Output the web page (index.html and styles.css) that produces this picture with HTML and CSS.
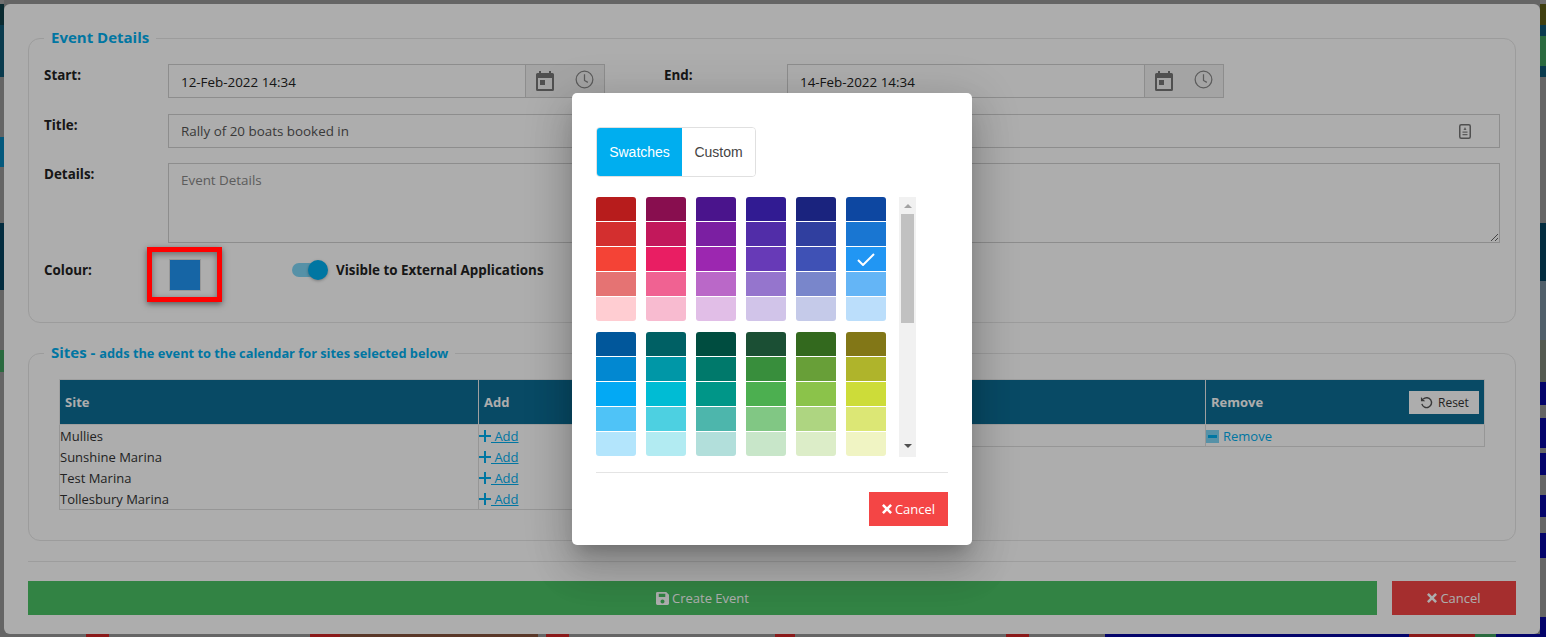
FILE: index.html
```html
<!DOCTYPE html>
<html lang="en">
<head>
    <meta charset="UTF-8">
    <meta name="viewport" content="width=device-width, initial-scale=1.0">
    <title>Create Event</title>
    <link rel="stylesheet" href="styles.css">
</head>
<body>
    <!-- page behind the dialog, only its edges show -->
    <div class="backdrop">
        <div class="strip-left">
            <div class="bg-top"></div><div class="bg-ink"></div><div class="bg-teal"></div><div></div><div class="bg-blue"></div><div></div><div class="bg-navy"></div><div></div><div class="bg-green"></div><div></div>
        </div>
        <div class="strip-right">
            <div class="bg-top"></div><div class="bg-olive"></div><div class="bg-teal"></div><div class="bg-green"></div><div class="bg-teal"></div><div></div><div class="bg-navy"></div><div class="bg-slate"></div><div class="bg-moss"></div><div class="bg-indigo"></div><div></div><div class="bg-indigo"></div><div></div><div class="bg-indigo"></div><div></div><div class="bg-indigo"></div><div></div><div class="bg-indigo"></div><div></div><div class="bg-indigo"></div>
        </div>
        <div class="strip-bottom">
            <div></div><div class="bg-red"></div><div></div><div class="bg-red"></div><div class="bg-brown"></div><div></div><div class="bg-red"></div><div></div><div class="bg-red"></div><div></div><div class="bg-red"></div><div></div><div class="bg-indigo"></div><div class="bg-red"></div><div class="bg-green"></div><div class="bg-indigo"></div>
        </div>
    </div>

    <div class="dialog">
        <fieldset class="box event-box">
            <legend>Event Details</legend>

            <div class="row">
                <label class="lbl">Start:</label>
                <div class="date-group">
                    <input class="txt date" type="text" value="12-Feb-2022 14:34">
                    <div class="addon">
                        <svg class="ico-cal" viewBox="0 0 18 20"><path d="M3 0h2v2h8V0h2v2h1.500A1.500 1.500 0 0 1 18 3.500v15a1.500 1.500 0 0 1-1.500 1.500h-15A1.500 1.500 0 0 1 0 18.500v-15A1.500 1.500 0 0 1 1.500 2H3zM2 7v11h14V7z"/><rect x="4" y="9" width="5" height="5"/></svg>
                        <svg class="ico-clock" viewBox="0 0 20 20"><circle cx="10" cy="10" r="8.800"/><path d="M10 4.500V11l3.500 2"/></svg>
                    </div>
                </div>
                <label class="lbl lbl-end">End:</label>
                <div class="date-group">
                    <input class="txt date" type="text" value="14-Feb-2022 14:34">
                    <div class="addon">
                        <svg class="ico-cal" viewBox="0 0 18 20"><path d="M3 0h2v2h8V0h2v2h1.500A1.500 1.500 0 0 1 18 3.500v15a1.500 1.500 0 0 1-1.500 1.500h-15A1.500 1.500 0 0 1 0 18.500v-15A1.500 1.500 0 0 1 1.500 2H3zM2 7v11h14V7z"/><rect x="4" y="9" width="5" height="5"/></svg>
                        <svg class="ico-clock" viewBox="0 0 20 20"><circle cx="10" cy="10" r="8.800"/><path d="M10 4.500V11l3.500 2"/></svg>
                    </div>
                </div>
            </div>

            <div class="row title-row">
                <label class="lbl">Title:</label>
                <div class="title-field">
                    <input class="txt muted" type="text" value="Rally of 20 boats booked in">
                    <svg class="ico-contact" viewBox="0 0 12 15"><rect x="0.750" y="0.750" width="10.500" height="13.500" rx="1.500"/><path class="fill" d="M6 3l1.500 3h-3zM3.500 7.500h5v1.200h-5zM3.500 10h5v1.200h-5z"/></svg>
                </div>
            </div>

            <div class="row details-row">
                <label class="lbl">Details:</label>
                <textarea class="txt details" placeholder="Event Details"></textarea>
            </div>

            <div class="row colour-row">
                <label class="lbl lbl-colour">Colour:</label>
                <div class="colour-swatch"><span class="callout"></span></div>
                <div class="toggle"><span class="knob"></span></div>
                <span class="toggle-text">Visible to External Applications</span>
            </div>
        </fieldset>

        <fieldset class="box sites-box">
            <legend>Sites - <small>adds the event to the calendar for sites selected below</small></legend>
            <div class="tables">
                <table class="sites">
                    <thead><tr><th class="col-site">Site</th><th>Add</th></tr></thead>
                    <tbody>
                        <tr><td>Mullies</td><td><a href="#" class="link"><svg class="ico-plus" viewBox="0 0 12 12"><path d="M5 0h2v5h5v2H7v5H5V7H0V5h5z"/></svg> Add</a></td></tr>
                        <tr><td>Sunshine Marina</td><td><a href="#" class="link"><svg class="ico-plus" viewBox="0 0 12 12"><path d="M5 0h2v5h5v2H7v5H5V7H0V5h5z"/></svg> Add</a></td></tr>
                        <tr><td>Test Marina</td><td><a href="#" class="link"><svg class="ico-plus" viewBox="0 0 12 12"><path d="M5 0h2v5h5v2H7v5H5V7H0V5h5z"/></svg> Add</a></td></tr>
                        <tr><td>Tollesbury Marina</td><td><a href="#" class="link"><svg class="ico-plus" viewBox="0 0 12 12"><path d="M5 0h2v5h5v2H7v5H5V7H0V5h5z"/></svg> Add</a></td></tr>
                    </tbody>
                </table>
                <table class="sites selected">
                    <thead><tr><th class="col-chosen">Site</th><th><div class="head-flex">Remove <button class="reset" type="button"><svg class="ico-undo" viewBox="0 0 14 14"><path d="M3.500 3.300A5.300 5.300 0 1 1 2 8.500"/><path class="fill" d="M1 1v4.600h4.600z"/></svg>Reset</button></div></th></tr></thead>
                    <tbody>
                        <tr><td>Mullies</td><td><a href="#" class="link plain"><span class="minus"><i></i></span>Remove</a></td></tr>
                    </tbody>
                </table>
            </div>
        </fieldset>

        <hr class="divider">

        <div class="actions">
            <button class="btn btn-save" type="button"><svg class="ico-save" viewBox="0 0 14 14"><path d="M1.500 0H11l3 3v9.500a1.500 1.500 0 0 1-1.500 1.500h-11A1.500 1.500 0 0 1 0 12.500v-11A1.500 1.500 0 0 1 1.500 0zM3 2v3.500h7V2zm4 6a2.200 2.200 0 1 0 0 4.400A2.200 2.200 0 0 0 7 8z" fill-rule="evenodd"/></svg>Create Event</button>
            <button class="btn btn-cancel" type="button"><svg class="ico-x" viewBox="0 0 10 10"><path d="M1.800 0L5 3.200 8.200 0 10 1.800 6.800 5 10 8.200 8.200 10 5 6.800 1.800 10 0 8.200 3.200 5 0 1.800z"/></svg>Cancel</button>
        </div>
    </div>

    <div class="scrim"></div>

    <div class="picker">
        <div class="tabs">
            <button class="tab tab-on" type="button">Swatches</button>
            <button class="tab" type="button">Custom</button>
        </div>

        <div class="palette-wrap">
            <div class="palette">
                <div class="group">
                    <div class="red-9"></div><div class="red-7"></div><div class="red-5"></div><div class="red-3"></div><div class="red-1"></div>
                    <div class="pink-9"></div><div class="pink-7"></div><div class="pink-5"></div><div class="pink-3"></div><div class="pink-1"></div>
                    <div class="purple-9"></div><div class="purple-7"></div><div class="purple-5"></div><div class="purple-3"></div><div class="purple-1"></div>
                    <div class="deep-9"></div><div class="deep-7"></div><div class="deep-5"></div><div class="deep-3"></div><div class="deep-1"></div>
                    <div class="indigo-9"></div><div class="indigo-7"></div><div class="indigo-5"></div><div class="indigo-3"></div><div class="indigo-1"></div>
                    <div class="blue-9"></div><div class="blue-7"></div><div class="blue-5 picked"><svg class="ico-check" viewBox="0 0 18 13"><path d="M1 7l5 5L17 1"/></svg></div><div class="blue-3"></div><div class="blue-1"></div>
                </div>
                <div class="group">
                    <div class="sky-9"></div><div class="sky-7"></div><div class="sky-5"></div><div class="sky-3"></div><div class="sky-1"></div>
                    <div class="cyan-9"></div><div class="cyan-7"></div><div class="cyan-5"></div><div class="cyan-3"></div><div class="cyan-1"></div>
                    <div class="teal-9"></div><div class="teal-7"></div><div class="teal-5"></div><div class="teal-3"></div><div class="teal-1"></div>
                    <div class="green-9"></div><div class="green-7"></div><div class="green-5"></div><div class="green-3"></div><div class="green-1"></div>
                    <div class="lime-9"></div><div class="lime-7"></div><div class="lime-5"></div><div class="lime-3"></div><div class="lime-1"></div>
                    <div class="olive-9"></div><div class="olive-7"></div><div class="olive-5"></div><div class="olive-3"></div><div class="olive-1"></div>
                </div>
            </div>
            <div class="scrollbar">
                <span class="arrow-up"></span>
                <span class="thumb"></span>
                <span class="arrow-down"></span>
            </div>
        </div>

        <hr class="picker-rule">

        <div class="picker-foot">
            <button class="btn btn-cancel picker-cancel" type="button"><svg class="ico-x" viewBox="0 0 10 10"><path d="M1.800 0L5 3.200 8.200 0 10 1.800 6.800 5 10 8.200 8.200 10 5 6.800 1.800 10 0 8.200 3.200 5 0 1.800z"/></svg>Cancel</button>
        </div>
    </div>
</body>
</html>
```

FILE: styles.css
```css
* {
    box-sizing: border-box;
}
html, body {
    height: 637px;
}
body {
    margin: 0;
    padding: 4px 6px 3px 4px;
    position: relative;
    overflow: hidden;
    font-family: "Open Sans", "Noto Sans", sans-serif;
    font-size: 13px;
    color: #333;
    background-color: #969696;
}

/* behind the dialog */
.backdrop {
    position: absolute;
    top: 0;
    left: 0;
    right: 0;
    bottom: 0;
}
.strip-left, .strip-right {
    position: absolute;
    top: 0;
    bottom: 0;
    display: grid;
}
.strip-left {
    left: 0;
    width: 4px;
    grid-template-rows: 4px 21px 52px 60px 30px 56px 67px 60px 22px 1fr;
}
.strip-right {
    right: 0;
    width: 6px;
    grid-template-rows: 4px 21px 11px 30px 11px 146px 58px 59px 42px 23px 13px 30px 5px 22px 20px 22px 16px 25px 59px 1fr;
}
.strip-bottom {
    position: absolute;
    left: 0;
    right: 0;
    bottom: 0;
    height: 3px;
    display: grid;
    grid-template-columns: 86px 23px 201px 30px 198px 8px 23px 206px 20px 211px 23px 76px 304px 66px 21px 1fr;
}
.bg-top { background-color: #a5a5a5; }
.bg-ink { background-color: #0f3e47; }
.bg-teal { background-color: #0f5873; }
.bg-blue { background-color: #0783b9; }
.bg-navy { background-color: #05415e; }
.bg-green { background-color: #3e9c5d; }
.bg-olive { background-color: #5d5e18; }
.bg-slate { background-color: #768d9c; }
.bg-moss { background-color: #7d8476; }
.bg-indigo { background-color: #07079d; }
.bg-red { background-color: #cc2626; }
.bg-brown { background-color: #84523b; }

/* dialog */
.dialog {
    position: relative;
    height: 630px;
    padding: 24px;
    background-color: #fff;
    border-radius: 6px;
}
.scrim {
    position: absolute;
    top: 0;
    left: 0;
    right: 0;
    bottom: 0;
    z-index: 2;
    background-color: rgba(0, 0, 0, 0.32);
}
.box {
    margin: 0;
    min-width: 0;
    border: 1px solid #e6e6e6;
    border-radius: 12px;
}
.box legend {
    height: 20px;
    margin: 0;
    padding: 0 7px 2px;
    font-size: 15px;
    line-height: 18px;
    font-weight: bold;
    color: #00aeef;
}
.box legend small {
    font-size: 12.800px;
}
.event-box {
    height: 295px;
    padding: 16px 15px 0;
}
.sites-box {
    height: 198px;
    margin-top: 20px;
    padding: 16px 30px 0;
}
.sites-box legend {
    margin-left: -15px;
}
.row {
    display: flex;
}
.title-row {
    margin-top: 16px;
}
.details-row {
    margin-top: 15px;
}
.colour-row {
    margin-top: 16px;
    align-items: flex-start;
}
.lbl {
    flex: none;
    width: 124px;
    font-size: 13.400px;
    font-weight: bold;
    line-height: 22px;
    color: #222;
}
.lbl-end {
    width: 123px;
    margin-left: 59px;
}
.lbl-colour {
    width: 125px;
}
.txt {
    width: 100%;
    height: 34px;
    padding: 0 12px;
    font-family: inherit;
    font-size: 13.400px;
    color: #222;
    background-color: #fff;
    border: 1px solid #d0d0d0;
    border-radius: 0;
    outline: none;
}
.date {
    padding-top: 2px;
}
.muted {
    color: #555;
}
.date-group {
    flex: none;
    width: 437px;
    display: flex;
}
.addon {
    flex: none;
    width: 79px;
    height: 34px;
    display: flex;
    align-items: center;
    padding-left: 10px;
    background-color: #f2f2f2;
    border: 1px solid #d0d0d0;
    border-left: none;
}
.ico-cal {
    width: 18px;
    height: 20px;
    fill: #777;
}
.ico-clock {
    width: 19px;
    height: 19px;
    margin-left: 21px;
    margin-top: -3px;
    fill: none;
    stroke: #888;
    stroke-width: 1.300;
}
.title-field {
    flex: 1;
    position: relative;
}
.ico-contact {
    position: absolute;
    top: 10px;
    right: 29px;
    width: 12px;
    height: 15px;
    fill: none;
    stroke: #777;
    stroke-width: 1.500;
}
.ico-contact .fill {
    fill: #888;
    stroke: none;
}
.details {
    display: block;
    flex: 1;
    height: 80px;
    padding-top: 7px;
    resize: both;
}
.details::placeholder {
    color: #888;
    opacity: 1;
}
.colour-swatch {
    position: relative;
    flex: none;
    width: 32px;
    height: 32px;
    background-color: #2196f3;
    border: 1px solid #e0e0e0;
}
.callout {
    position: absolute;
    top: -13px;
    left: -23px;
    width: 75px;
    height: 55px;
    z-index: 3;
    border: 5px solid #f00;
    box-shadow: 0 2px 6px rgba(0, 0, 0, 0.5), inset 0 2px 6px rgba(0, 0, 0, 0.4);
}
.toggle {
    position: relative;
    flex: none;
    width: 24px;
    height: 14px;
    margin: 4px 0 0 91px;
    background-color: rgba(0, 174, 239, 0.5);
    border-radius: 7px;
}
.knob {
    position: absolute;
    top: -3px;
    right: -12px;
    width: 20px;
    height: 20px;
    border-radius: 50%;
    background-color: #00aeef;
    box-shadow: 0 1px 3px rgba(0, 0, 0, 0.3);
}
.toggle-text {
    margin-left: 20px;
    font-size: 13.400px;
    font-weight: bold;
    line-height: 22px;
    color: #222;
}

/* site tables */
.tables {
    display: flex;
}
.sites {
    width: 713px;
    flex: none;
    align-self: flex-start;
    table-layout: fixed;
    border-collapse: collapse;
}
.sites th {
    height: 45px;
    padding: 0 5px;
    text-align: left;
    font-size: 13px;
    color: #fff;
    background-color: #0c6e96;
    border: 1px solid #ebebeb;
}
.sites td {
    height: 21px;
    padding: 1px 0 0;
    line-height: 20px;
    color: #333;
    border-left: 1px solid #dedede;
    border-right: 1px solid #dedede;
}
.sites tr:last-child td {
    border-bottom: 1px solid #dedede;
}
.col-site {
    width: 419px;
}
.col-chosen {
    width: 433px;
}
.link {
    color: #00aeef;
}
.plain {
    text-decoration: none;
}
.ico-plus {
    width: 12px;
    height: 12px;
    fill: #00aeef;
    vertical-align: -1px;
}
.minus {
    display: inline-block;
    width: 13px;
    height: 13px;
    margin-right: 4px;
    vertical-align: -2px;
    padding-top: 5px;
    background-color: rgba(0, 174, 239, 0.5);
}
.minus i {
    display: block;
    height: 3px;
    margin: 0 2px;
    background-color: #00aeef;
}
.head-flex {
    display: flex;
    align-items: center;
    justify-content: space-between;
}
.reset {
    display: flex;
    align-items: center;
    gap: 5px;
    width: 70px;
    height: 23px;
    padding: 0 0 0 11px;
    font-family: inherit;
    font-size: 12px;
    color: #333;
    background-color: #fff;
    border: none;
}
.ico-undo {
    width: 13px;
    height: 13px;
    fill: none;
    stroke: #555;
    stroke-width: 1.500;
}
.ico-undo .fill {
    fill: #555;
    stroke: none;
}

/* footer */
.divider {
    height: 1px;
    margin: 20px 0 19px;
    border: none;
    background-color: #e8e8e8;
}
.actions {
    display: flex;
    gap: 15px;
}
.btn {
    display: flex;
    align-items: center;
    justify-content: center;
    gap: 3px;
    height: 34px;
    padding: 0;
    font-family: inherit;
    font-size: 13px;
    color: #fff;
    border: none;
}
.btn-save {
    flex: 1;
    background-color: #4ac165;
}
.btn-cancel {
    flex: none;
    width: 124px;
    background-color: #f44545;
}
.ico-save {
    width: 13px;
    height: 13px;
    fill: #fff;
}
.ico-x {
    width: 10px;
    height: 10px;
    fill: #fff;
}

/* colour picker */
.picker {
    position: absolute;
    top: 93px;
    left: 572px;
    width: 400px;
    height: 452px;
    z-index: 3;
    padding: 34px 24px 0;
    background-color: #fff;
    border-radius: 5px;
    box-shadow: 0 11px 15px -7px rgba(0, 0, 0, 0.2), 0 24px 38px 3px rgba(0, 0, 0, 0.14), 0 9px 46px 8px rgba(0, 0, 0, 0.12);
}
.tabs {
    display: flex;
    width: 160px;
    height: 50px;
    border: 1px solid #e0e0e0;
    border-radius: 4px;
    overflow: hidden;
}
.tab {
    padding: 0;
    flex: 1;
    font-family: "Liberation Sans", Arial, sans-serif;
    font-size: 14px;
    color: #444;
    background-color: #fff;
    border: none;
}
.tab-on {
    flex: none;
    width: 85px;
    color: #fff;
    background-color: #00aeef;
}
.palette-wrap {
    display: flex;
    margin-top: 20px;
    height: 260px;
}
.palette {
    width: 290px;
    display: flex;
    flex-direction: column;
    gap: 11px;
}
.group {
    display: grid;
    grid-template-rows: repeat(5, 24px);
    grid-auto-flow: column;
    grid-auto-columns: 40px;
    column-gap: 10px;
    row-gap: 1px;
}
.group div:nth-child(5n+1) {
    border-radius: 3px 3px 0 0;
}
.group div:nth-child(5n) {
    border-radius: 0 0 3px 3px;
}
.picked {
    display: flex;
    align-items: center;
    justify-content: center;
}
.ico-check {
    width: 18px;
    height: 13px;
    fill: none;
    stroke: #fff;
    stroke-width: 2;
}
.scrollbar {
    width: 17px;
    margin-left: 13px;
    padding: 0 2px;
    display: flex;
    flex-direction: column;
    align-items: center;
    background-color: #f1f1f1;
}
.arrow-up, .arrow-down {
    width: 0;
    height: 0;
    border-left: 4px solid transparent;
    border-right: 4px solid transparent;
}
.arrow-up {
    margin-top: 7px;
    border-bottom: 4px solid #a3a3a3;
}
.arrow-down {
    margin-top: 121px;
    border-top: 4px solid #505050;
}
.thumb {
    width: 13px;
    height: 109px;
    margin-top: 6px;
    background-color: #c1c1c1;
}
.picker-rule {
    height: 1px;
    margin: 15px 0 19px;
    border: none;
    background-color: #e4e4e4;
}
.picker-foot {
    display: flex;
    justify-content: flex-end;
}
.picker-cancel {
    width: 79px;
    font-size: 13px;
}

/* swatch colours */
.red-9 { background-color: #b71c1c; }
.red-7 { background-color: #d32f2f; }
.red-5 { background-color: #f44336; }
.red-3 { background-color: #e57373; }
.red-1 { background-color: #ffcdd2; }
.pink-9 { background-color: #880e4f; }
.pink-7 { background-color: #c2185b; }
.pink-5 { background-color: #e91e63; }
.pink-3 { background-color: #f06292; }
.pink-1 { background-color: #f8bbd0; }
.purple-9 { background-color: #4a148c; }
.purple-7 { background-color: #7b1fa2; }
.purple-5 { background-color: #9c27b0; }
.purple-3 { background-color: #ba68c8; }
.purple-1 { background-color: #e1bee7; }
.deep-9 { background-color: #311b92; }
.deep-7 { background-color: #512da8; }
.deep-5 { background-color: #673ab7; }
.deep-3 { background-color: #9575cd; }
.deep-1 { background-color: #d1c4e9; }
.indigo-9 { background-color: #1a237e; }
.indigo-7 { background-color: #303f9f; }
.indigo-5 { background-color: #3f51b5; }
.indigo-3 { background-color: #7986cb; }
.indigo-1 { background-color: #c5cae9; }
.blue-9 { background-color: #0d47a1; }
.blue-7 { background-color: #1976d2; }
.blue-5 { background-color: #2196f3; }
.blue-3 { background-color: #64b5f6; }
.blue-1 { background-color: #bbdefb; }
.sky-9 { background-color: #01579b; }
.sky-7 { background-color: #0288d1; }
.sky-5 { background-color: #03a9f4; }
.sky-3 { background-color: #4fc3f7; }
.sky-1 { background-color: #b3e5fc; }
.cyan-9 { background-color: #006064; }
.cyan-7 { background-color: #0097a7; }
.cyan-5 { background-color: #00bcd4; }
.cyan-3 { background-color: #4dd0e1; }
.cyan-1 { background-color: #b2ebf2; }
.teal-9 { background-color: #004d40; }
.teal-7 { background-color: #00796b; }
.teal-5 { background-color: #009688; }
.teal-3 { background-color: #4db6ac; }
.teal-1 { background-color: #b2dfdb; }
.green-9 { background-color: #1b4f34; }
.green-7 { background-color: #388e3c; }
.green-5 { background-color: #4caf50; }
.green-3 { background-color: #81c784; }
.green-1 { background-color: #c8e6c9; }
.lime-9 { background-color: #33691e; }
.lime-7 { background-color: #689f38; }
.lime-5 { background-color: #8bc34a; }
.lime-3 { background-color: #aed581; }
.lime-1 { background-color: #dcedc8; }
.olive-9 { background-color: #827717; }
.olive-7 { background-color: #afb42b; }
.olive-5 { background-color: #cddc39; }
.olive-3 { background-color: #dce775; }
.olive-1 { background-color: #f0f4c3; }
```
